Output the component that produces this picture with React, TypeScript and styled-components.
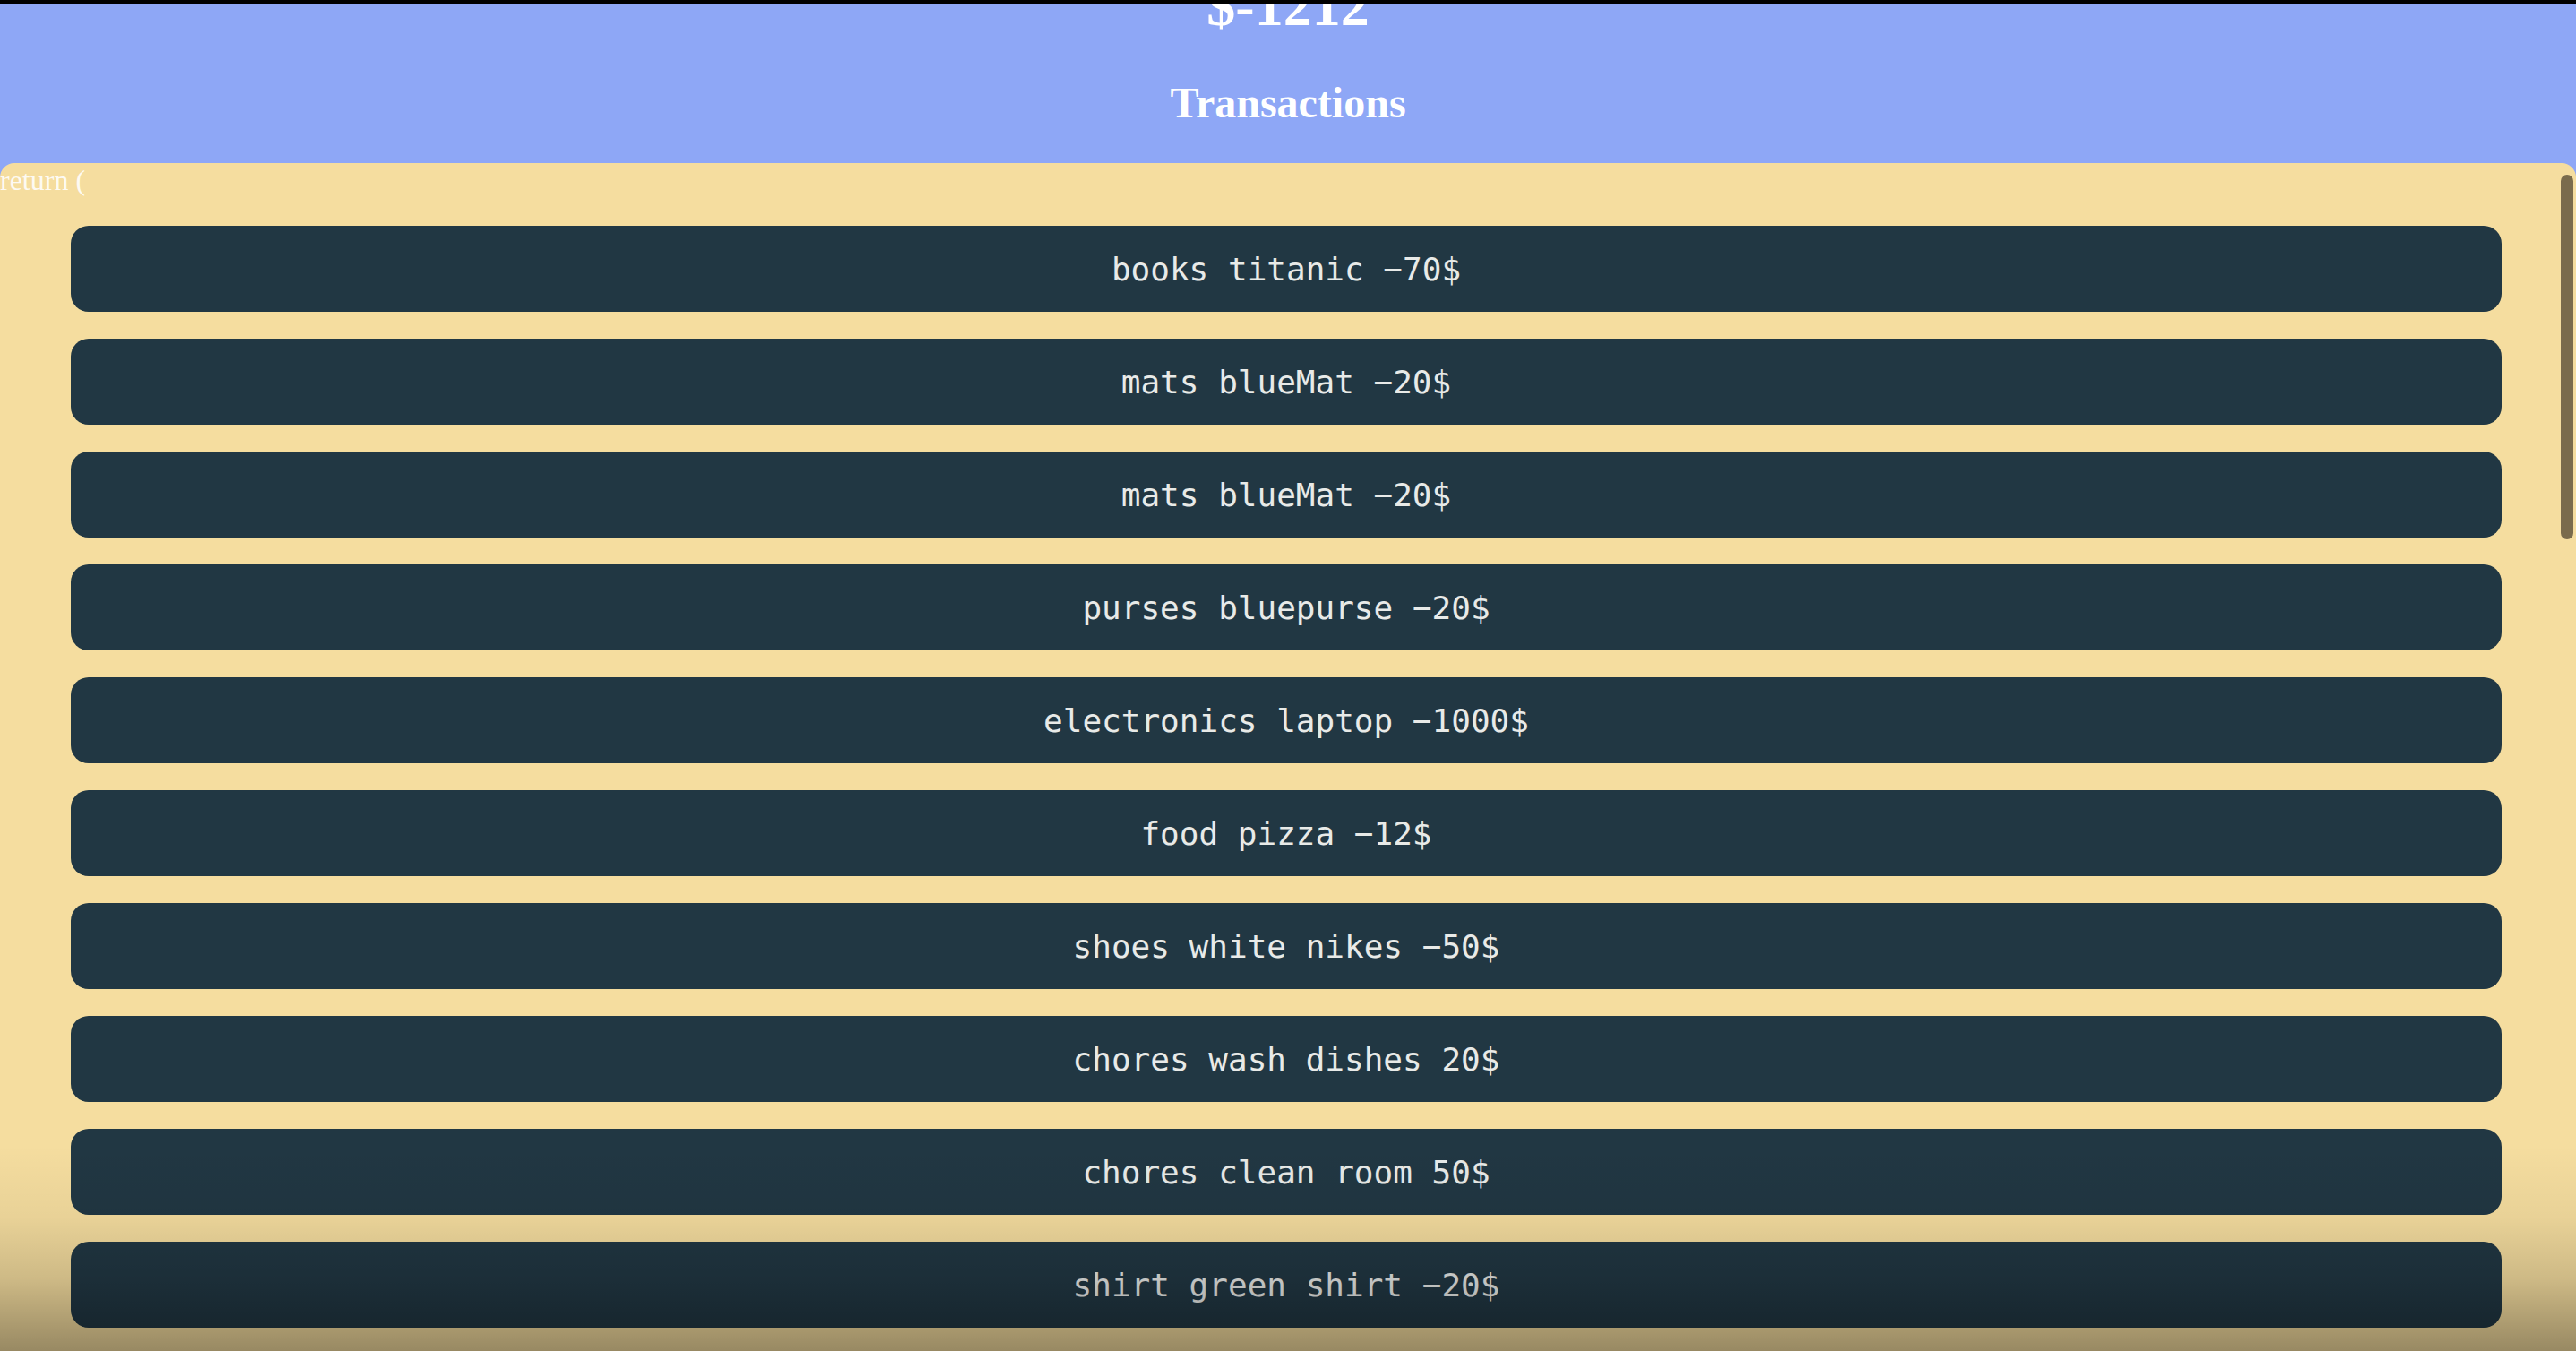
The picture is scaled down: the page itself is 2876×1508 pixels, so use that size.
import React from "react";
import styled, { createGlobalStyle } from "styled-components";

const GlobalStyle = createGlobalStyle`
  html, body {
    margin: 0;
    padding: 0;
    overflow: hidden;
    background: #8ea7f6;
  }
  #root {
    height: 100vh;
  }
`;

const Page = styled.div`
  position: relative;
  box-sizing: border-box;
  height: 100vh;
  display: flex;
  flex-direction: column;
  background: #8ea7f6;
  border-top: 4px solid #000;
  overflow: hidden;
`;

const Header = styled.header`
  flex: 0 0 178px;
  height: 178px;
  overflow: hidden;
  text-align: center;
  color: #ffffff;
  font-family: "Liberation Serif", "Times New Roman", serif;
`;

const Balance = styled.h1`
  margin: -34px 0 43px;
  font-size: 64px;
  line-height: 74px;
  font-weight: 700;
`;

const Title = styled.h2`
  margin: 0;
  font-size: 48px;
  line-height: 55px;
  font-weight: 700;
`;

const Panel = styled.main`
  position: relative;
  flex: 1 1 auto;
  background: #f5dd9f;
  border-radius: 16px 16px 0 0;
  overflow: hidden;
`;

const StrayText = styled.div`
  margin: 0;
  padding-top: 1px;
  font-family: "Liberation Serif", "Times New Roman", serif;
  font-size: 32px;
  line-height: 37px;
  color: rgba(255, 255, 255, 0.88);
`;

const List = styled.ul`
  list-style: none;
  margin: 0;
  padding: 32px 83px 0 79px;
  display: flex;
  flex-direction: column;
  gap: 30px;
`;

const Row = styled.li`
  flex: 0 0 96px;
  height: 96px;
  display: flex;
  align-items: center;
  justify-content: center;
  border-radius: 20px;
  background: #213743;
  color: #e8eae8;
  font-family: "DejaVu Sans Mono", "Liberation Mono", monospace;
  font-size: 36px;
  white-space: pre;
`;

const ScrollThumb = styled.div`
  position: absolute;
  top: 13px;
  right: 3px;
  width: 14px;
  height: 407px;
  border-radius: 7px;
  background: #7a6b4c;
`;

const BottomShade = styled.div`
  position: absolute;
  left: 0;
  right: 0;
  bottom: 0;
  height: 230px;
  pointer-events: none;
  background: linear-gradient(
    to bottom,
    rgba(0, 0, 0, 0) 0%,
    rgba(0, 0, 0, 0.05) 35%,
    rgba(0, 0, 0, 0.16) 65%,
    rgba(0, 0, 0, 0.38) 100%
  );
`;

type Tx = { category: string; name: string; amount: number };

const transactions: Tx[] = [
  { category: "books", name: "titanic", amount: -70 },
  { category: "mats", name: "blueMat", amount: -20 },
  { category: "mats", name: "blueMat", amount: -20 },
  { category: "purses", name: "bluepurse", amount: -20 },
  { category: "electronics", name: "laptop", amount: -1000 },
  { category: "food", name: "pizza", amount: -12 },
  { category: "shoes", name: "white nikes", amount: -50 },
  { category: "chores", name: "wash dishes", amount: 20 },
  { category: "chores", name: "clean room", amount: 50 },
  { category: "shirt", name: "green shirt", amount: -20 },
];

const balance = -1212;

const formatAmount = (n: number) => (n < 0 ? `\u2212${Math.abs(n)}$` : `${n}$`);

export default function App() {
  return (
    <>
      <GlobalStyle />
      <Page>
        <Header>
          <Balance>${balance}</Balance>
          <Title>Transactions</Title>
        </Header>
        <Panel>
          <StrayText>return (</StrayText>
          <List>
            {transactions.map((t, i) => (
              <Row key={i}>
                {`${t.category} ${t.name} ${formatAmount(t.amount)}`}
              </Row>
            ))}
          </List>
          <ScrollThumb />
        </Panel>
        <BottomShade />
      </Page>
    </>
  );
}
